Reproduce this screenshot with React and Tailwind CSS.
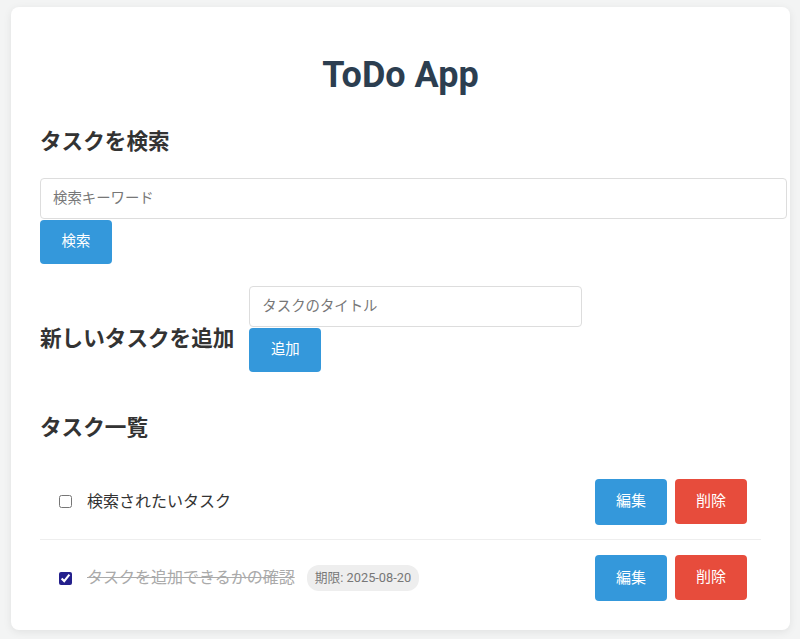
import React, { useState } from 'react';

const font = { fontFamily: 'Roboto, "Noto Sans CJK JP", sans-serif' };

const initialTasks = [
  { id: 1, title: '検索されたいタスク', done: false, due: null },
  { id: 2, title: 'タスクを追加できるかの確認', done: true, due: '2025-08-20' },
];

const App = () => {
  const [tasks, setTasks] = useState(initialTasks);

  const toggle = (id) =>
    setTasks((prev) => prev.map((t) => (t.id === id ? { ...t, done: !t.done } : t)));

  return (
    <div
      className="min-h-screen bg-[#f3f4f4] pt-[7px] pl-[11px] pr-[10px] pb-[9px]"
      style={font}
    >
      <div className="bg-white rounded-lg shadow-[0_2px_8px_rgba(0,0,0,0.08)] px-[29px] pt-[47px] pb-[14px]">
        <h1 className="text-center text-[36px] leading-[42px] font-bold text-[#2c3e50]">
          ToDo App
        </h1>

        <h2 className="mt-[31px] text-[21.6px] leading-[30px] font-bold text-[#333]">
          タスクを検索
        </h2>
        <input
          type="text"
          placeholder="検索キーワード"
          className="mt-[21px] block w-[747px] h-[41px] px-3 border border-[#ddd] rounded text-[14.4px] text-[#333] placeholder:text-[#777] outline-none"
        />
        <button className="mt-px w-[72px] h-[44px] bg-[#3498db] text-white text-[14.4px] rounded">
          検索
        </button>

        <div className="mt-[22px] flex items-start">
          <h2 className="mt-[38px] text-[21.6px] leading-[30px] font-bold text-[#333]">
            新しいタスクを追加
          </h2>
          <div className="ml-[15px] flex flex-col items-start">
            <input
              type="text"
              placeholder="タスクのタイトル"
              className="block w-[333px] h-[41px] px-3 border border-[#ddd] rounded text-[14.4px] text-[#333] placeholder:text-[#777] outline-none"
            />
            <button className="mt-px w-[72px] h-[44px] bg-[#3498db] text-white text-[14.4px] rounded">
              追加
            </button>
          </div>
        </div>

        <h2 className="mt-[41px] text-[21.6px] leading-[30px] font-bold text-[#333]">
          タスク一覧
        </h2>

        <ul className="mt-[21px]">
          {tasks.map((task, i) => (
            <li
              key={task.id}
              className={`flex items-center h-[76px] pl-[15px] pr-[14px] ${
                i < tasks.length - 1 ? 'border-b border-[#eee]' : ''
              }`}
            >
              <input
                type="checkbox"
                checked={task.done}
                onChange={() => toggle(task.id)}
                className="ml-[4px] mr-[15px] w-[13px] h-[13px] accent-[#24208c]"
              />
              <span
                className={`text-[16px] ${
                  task.done ? 'line-through text-[#aaa]' : 'text-[#333]'
                }`}
              >
                {task.title}
              </span>
              {task.due && (
                <span className="ml-3 h-[26px] px-2 flex items-center rounded-xl bg-[#eee] text-[12.8px] text-[#777]">
                  期限: {task.due}
                </span>
              )}
              <div className="ml-auto flex gap-2">
                <button className="w-[72px] h-[46px] bg-[#3498db] text-white text-[15px] rounded">
                  編集
                </button>
                <button className="w-[72px] h-[45px] bg-[#e74c3c] text-white text-[15px] rounded">
                  削除
                </button>
              </div>
            </li>
          ))}
        </ul>
      </div>
    </div>
  );
};

export default App;
